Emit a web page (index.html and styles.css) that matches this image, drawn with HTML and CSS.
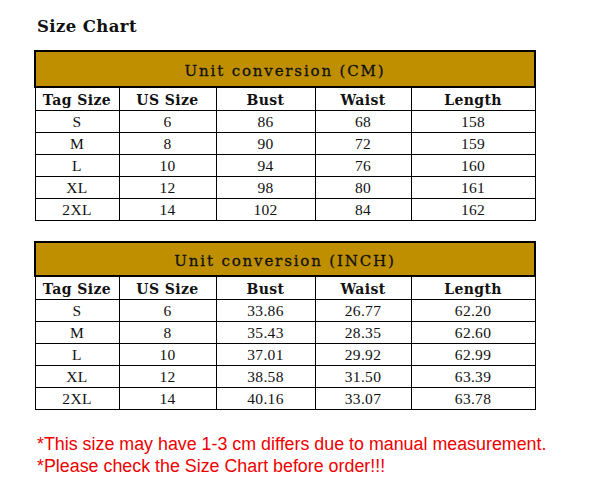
FILE: index.html
```html
<!DOCTYPE html>
<html>
<head>
<meta charset="utf-8">
<link rel="stylesheet" href="styles.css">
</head>
<body>
<div class="page">
  <h1 class="title">Size Chart</h1>

  <table class="chart">
    <colgroup><col class="c1"><col class="c2"><col class="c3"><col class="c4"><col class="c5"></colgroup>
    <tr class="band-row"><th colspan="5" class="band">Unit conversion (CM)</th></tr>
    <tr class="head-row"><th>Tag Size</th><th>US Size</th><th>Bust</th><th>Waist</th><th>Length</th></tr>
    <tr><td>S</td><td>6</td><td>86</td><td>68</td><td>158</td></tr>
    <tr><td>M</td><td>8</td><td>90</td><td>72</td><td>159</td></tr>
    <tr><td>L</td><td>10</td><td>94</td><td>76</td><td>160</td></tr>
    <tr><td>XL</td><td>12</td><td>98</td><td>80</td><td>161</td></tr>
    <tr><td>2XL</td><td>14</td><td>102</td><td>84</td><td>162</td></tr>
  </table>

  <table class="chart chart-second">
    <colgroup><col class="c1"><col class="c2"><col class="c3"><col class="c4"><col class="c5"></colgroup>
    <tr class="band-row band-row-short"><th colspan="5" class="band">Unit conversion (INCH)</th></tr>
    <tr class="head-row"><th>Tag Size</th><th>US Size</th><th>Bust</th><th>Waist</th><th>Length</th></tr>
    <tr><td>S</td><td>6</td><td>33.86</td><td>26.77</td><td>62.20</td></tr>
    <tr><td>M</td><td>8</td><td>35.43</td><td>28.35</td><td>62.60</td></tr>
    <tr><td>L</td><td>10</td><td>37.01</td><td>29.92</td><td>62.99</td></tr>
    <tr><td>XL</td><td>12</td><td>38.58</td><td>31.50</td><td>63.39</td></tr>
    <tr><td>2XL</td><td>14</td><td>40.16</td><td>33.07</td><td>63.78</td></tr>
  </table>

  <div class="notes">
    <p>*This size may have 1-3 cm differs due to manual measurement.</p>
    <p>*Please check the Size Chart before order!!!</p>
  </div>
</div>
</body>
</html>
```

FILE: styles.css
```css
html, body {
  margin: 0;
  padding: 0;
  background: #ffffff;
}

.page {
  padding: 15px 0 0 34px;
}

.title {
  margin: 0 0 0 3px;
  font-family: "DejaVu Serif", serif;
  font-weight: bold;
  font-size: 16.5px;
  line-height: 24px;
  letter-spacing: 0.4px;
  color: #111;
}

.chart {
  margin-top: 11px;
  border-collapse: collapse;
  table-layout: fixed;
  width: 500px;
  color: #111;
}

.chart-second {
  margin-top: 20px;
}

.c1 { width: 84px; }
.c2 { width: 97px; }
.c3 { width: 99px; }
.c4 { width: 96px; }
.c5 { width: 124px; }

.chart th,
.chart td {
  border: 1px solid #000;
  padding: 0;
  text-align: center;
  height: 20px;
  line-height: 20px;
  white-space: nowrap;
}

.chart td {
  font-family: "Liberation Serif", serif;
  font-size: 15.5px;
  font-weight: normal;
  letter-spacing: 0.3px;
  padding-top: 1px;
}

.head-row th {
  font-family: "DejaVu Serif", serif;
  font-size: 14px;
  font-weight: bold;
  letter-spacing: 0.4px;
  padding-top: 2px;
  height: 19px;
}

.band-row .band {
  border: 2px solid #000;
  background: #bf8f00;
  height: 31px;
  font-family: "DejaVu Serif", serif;
  font-size: 15px;
  font-weight: normal;
  letter-spacing: 1.85px;
  padding-top: 3px;
  -webkit-text-stroke: 0.3px #111;
}

.band-row-short .band {
  height: 29px;
}

.notes {
  margin-top: 23px;
  padding-left: 3px;
  font-family: "Liberation Sans", Arial, sans-serif;
  font-size: 17.85px;
  line-height: 22px;
  color: #ee0000;
}

.notes p {
  margin: 0;
}
```
